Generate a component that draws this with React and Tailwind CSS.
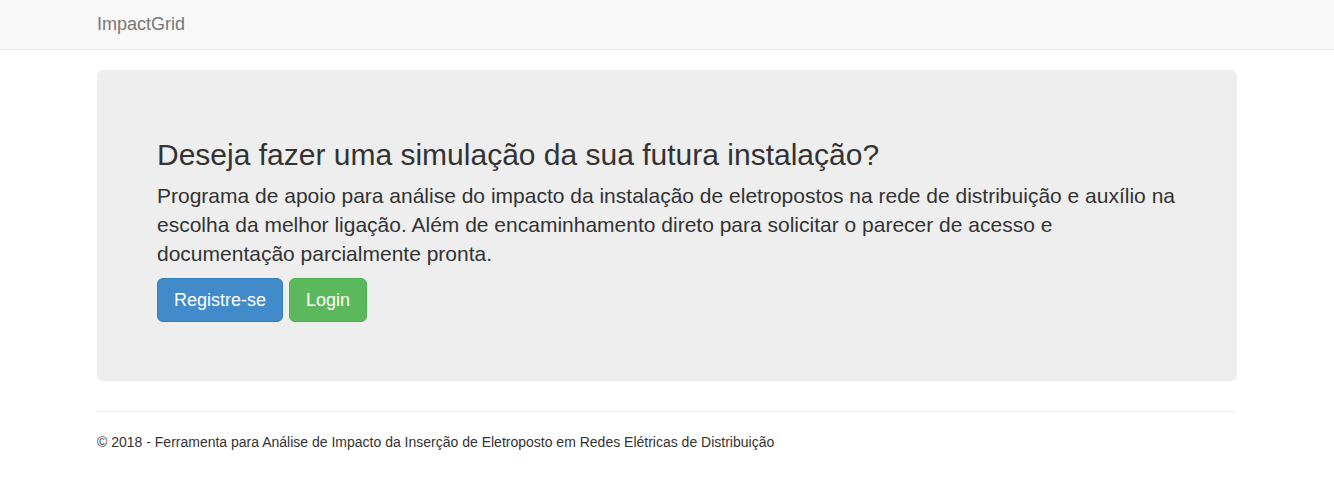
import React from "react";

const App = () => {
  return (
    <div
      className="min-h-screen bg-white text-[14px] leading-[20px] text-[#333]"
      style={{ fontFamily: '"Liberation Sans", Arial, sans-serif' }}
    >
      <nav className="h-[50px] bg-[#f8f8f8] border-b border-[#e7e7e7] mb-[20px]">
        <div className="w-[1170px] mx-auto px-[15px] flex items-center h-full">
          <a href="#" className="text-[18px] leading-[20px] text-[#777] -mt-[2px]">
            ImpactGrid
          </a>
        </div>
      </nav>

      <div className="w-[1170px] mx-auto px-[15px]">
        <div className="bg-[#eee] rounded-[6px] px-[60px] pt-[48px] pb-[49px] mb-[30px]">
          <h2 className="mt-[20px] mb-[10px] text-[30px] leading-[33px] font-medium">
            Deseja fazer uma simulação da sua futura instalação?
          </h2>
          <p className="text-[21px] leading-[29px] font-light mb-[10px]">
            Programa de apoio para análise do impacto da instalação de
            eletropostos na rede de distribuição e auxílio na escolha da melhor
            ligação. Além de encaminhamento direto para solicitar o parecer de
            acesso e documentação parcialmente pronta.
          </p>
          <div className="flex gap-[6px] mb-[10px]">
            <a
              href="#"
              className="h-[44px] flex items-center px-[16px] text-[18px] text-white bg-[#428bca] border border-[#357ebd] rounded-[6px]"
            >
              Registre-se
            </a>
            <a
              href="#"
              className="h-[44px] flex items-center px-[16px] text-[18px] text-white bg-[#5cb85c] border border-[#4cae4c] rounded-[6px]"
            >
              Login
            </a>
          </div>
        </div>
        <hr className="border-t border-[#eee]" />
        <footer className="pt-[20px]">
          <p>
            © 2018 - Ferramenta para Análise de Impacto da Inserção de
            Eletroposto em Redes Elétricas de Distribuição
          </p>
        </footer>
      </div>
    </div>
  );
};

export default App;
